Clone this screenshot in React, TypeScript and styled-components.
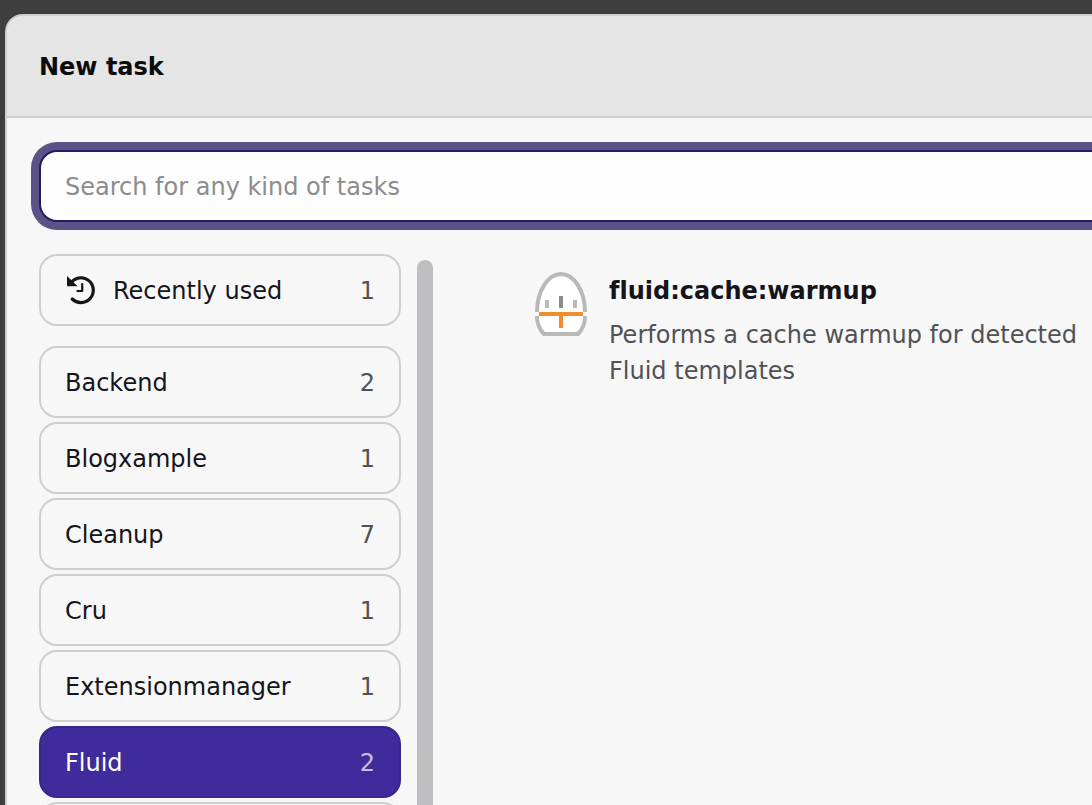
import React from "react";
import styled, { createGlobalStyle } from "styled-components";

const GlobalStyle = createGlobalStyle`
  *, *::before, *::after { box-sizing: border-box; }
  body {
    margin: 0;
    background: #3e3e3e;
    color: #15141a;
    font-family: Verdana, "DejaVu Sans", sans-serif;
    font-size: 24px;
    font-variant-ligatures: none;
    line-height: 36px;
  }
`;

const Backdrop = styled.div`
  display: flex;
  height: 100vh;
  padding: 14px 0 0 5px;
  overflow: hidden;
`;

const Dialog = styled.section`
  display: flex;
  flex: 1;
  flex-direction: column;
  min-width: 0;
  overflow: hidden;
  background: #f7f7f7;
  border: 2px solid #cfcfcf;
  border-width: 2px 0 0 2px;
  border-top-left-radius: 18px;
`;

const Header = styled.header`
  padding: 33px 32px 31px;
  background: #e5e5e5;
  border-bottom: 2px solid #cfcfcf;
`;

const Title = styled.h1`
  margin: 0;
  color: #0c0c0c;
  font-size: 24px;
  line-height: 36px;
`;

const SearchArea = styled.form`
  padding: 32px 0 32px 32px;
`;

const SearchInput = styled.input`
  display: block;
  width: 100%;
  height: 72px;
  padding: 2px 24px 0;
  background: #fdfdfd;
  border: 2px solid #271a62;
  border-right: 0;
  border-radius: 18px 0 0 18px;
  outline: none;
  box-shadow: 0 0 0 8px #5c5288;
  color: inherit;
  font: inherit;

  &::placeholder {
    color: #8c8c8f;
    opacity: 1;
  }
`;

const Body = styled.div`
  display: flex;
  flex: 1;
  min-height: 0;
  padding-left: 32px;
`;

const Sidebar = styled.nav`
  display: flex;
  flex: none;
  flex-direction: column;
  gap: 4px;
  width: 362px;
  overflow: hidden;
`;

const Category = styled.button<{ $active?: boolean; $separate?: boolean }>`
  display: flex;
  flex: none;
  align-items: center;
  gap: 16px;
  height: 72px;
  margin: 0 0 ${(p) => (p.$separate ? "16px" : "0")};
  padding: 0 24px;
  background: ${(p) => (p.$active ? "#3f2b9b" : "transparent")};
  border: 2px solid ${(p) => (p.$active ? "#38268a" : "#cfcfcf")};
  border-radius: 18px;
  color: ${(p) => (p.$active ? "#ffffff" : "inherit")};
  font: inherit;
  text-align: left;
`;

const CategoryName = styled.span`
  flex: 1;
  padding-top: 2px;
`;

const Count = styled.span<{ $active?: boolean }>`
  padding-top: 2px;
  color: ${(p) => (p.$active ? "#c5bfe1" : "#515155")};
`;

const ScrollTrack = styled.div`
  display: flex;
  flex: none;
  width: 16px;
  margin-left: 16px;
  padding-top: 6px;
`;

const ScrollThumb = styled.div`
  flex: 1;
  background: #bfbfc1;
  border-radius: 8px 8px 0 0;
`;

const Results = styled.main`
  flex: 1;
  min-width: 0;
  padding: 18px 14px 0 96px;
`;

const Task = styled.article`
  display: flex;
  gap: 16px;

  svg {
    flex: none;
  }
`;

const TaskText = styled.div`
  padding-top: 1px;
`;

const TaskName = styled.h2`
  margin: 0 0 8px;
  font-size: 24px;
  line-height: 36px;
`;

const TaskDescription = styled.p`
  margin: 0;
  color: #515155;
`;

const HistoryIcon = () => (
  <svg width="32" height="32" viewBox="0 0 16 16" fill="none" aria-hidden="true">
    <path d="M3.2 4.1A6.2 6.2 0 1 1 3.6 12.5" stroke="currentColor" strokeWidth="1.6" strokeLinecap="round" />
    <path d="M1 1v4.7q0 .4.4.4h4.9z" fill="currentColor" />
    <path d="M8.6 5v3.5H6.2" stroke="currentColor" strokeWidth="1.1" strokeLinecap="round" strokeLinejoin="round" />
  </svg>
);

const EggIcon = () => (
  <svg width="64" height="64" viewBox="0 0 64 64" aria-hidden="true">
    <path d="M6 40C6 18 18 0 32 0s26 18 26 40v4c0 8-3 15-8 20H14C9 59 6 52 6 44z" fill="#fff" />
    <path d="M8 40C8 19 19 2 32 2s24 17 24 38" fill="none" stroke="#b9b9b9" strokeWidth="4" />
    <path d="M6 44c0 8 3 15 8 20h36c5-5 8-12 8-20h-4c0 6-2 12-6 16H16c-4-4-6-10-6-16z" fill="#b9b9b9" />
    <path d="M16 28h4v8h-4zM44 28h4v8h-4z" fill="#b9b9b9" />
    <path d="M30 24h4v12h-4z" fill="#8c8c8c" />
    <path d="M10 40h44v4H34v12h-4V44H10z" fill="#ef8d2f" />
  </svg>
);

const categories = [
  { name: "Backend", count: 2 },
  { name: "Blogxample", count: 1 },
  { name: "Cleanup", count: 7 },
  { name: "Cru", count: 1 },
  { name: "Extensionmanager", count: 1 },
  { name: "Fluid", count: 2, active: true },
];

export default function App() {
  return (
    <>
      <GlobalStyle />
      <Backdrop>
        <Dialog role="dialog" aria-labelledby="dialog-title">
          <Header>
            <Title id="dialog-title">New task</Title>
          </Header>
          <SearchArea role="search">
            <SearchInput
              type="text"
              aria-label="Search for any kind of tasks"
              placeholder="Search for any kind of tasks"
            />
          </SearchArea>
          <Body>
            <Sidebar>
              <Category type="button" $separate>
                <HistoryIcon />
                <CategoryName>Recently used</CategoryName>
                <Count>1</Count>
              </Category>
              {categories.map(({ name, count, active }) => (
                <Category key={name} type="button" $active={active} aria-pressed={!!active}>
                  <CategoryName>{name}</CategoryName>
                  <Count $active={active}>{count}</Count>
                </Category>
              ))}
              <Category type="button" aria-label="More tasks" />
            </Sidebar>
            <ScrollTrack>
              <ScrollThumb />
            </ScrollTrack>
            <Results>
              <Task>
                <EggIcon />
                <TaskText>
                  <TaskName>fluid:cache:warmup</TaskName>
                  <TaskDescription>
                    Performs a cache warmup for detected Fluid templates
                  </TaskDescription>
                </TaskText>
              </Task>
            </Results>
          </Body>
        </Dialog>
      </Backdrop>
    </>
  );
}
